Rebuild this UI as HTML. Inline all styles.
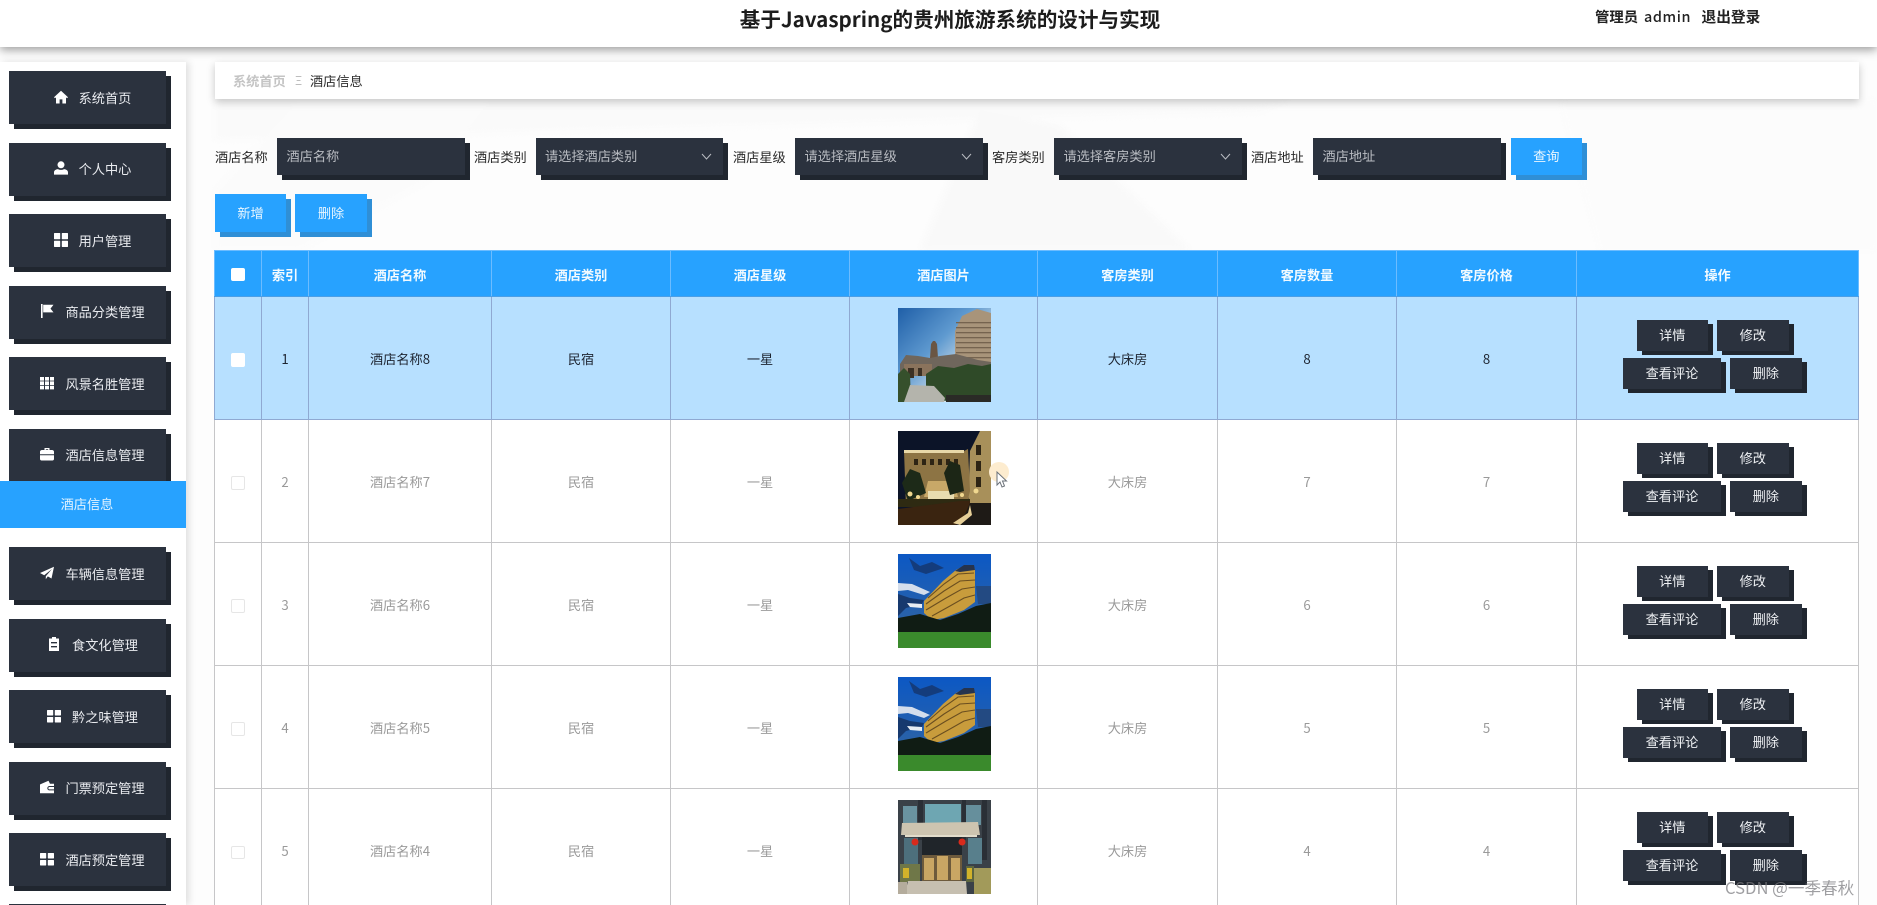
<!DOCTYPE html>
<html lang="zh-CN">
<head>
<meta charset="utf-8">
<title>基于Javaspring的贵州旅游系统的设计与实现</title>
<style>
*{box-sizing:border-box;margin:0;padding:0}
html,body{width:1877px;height:905px;overflow:hidden;background:#fdfdfd}
body{font-family:"Noto Sans CJK SC","Liberation Sans",sans-serif;font-size:13.2px;color:#333}
#page{position:relative;width:1877px;height:905px;overflow:hidden}
.abs{position:absolute}
#bg{position:absolute;left:0;top:0;filter:blur(3px)}
#hdr{position:absolute;left:0;top:0;width:1877px;height:47px;background:#fff;box-shadow:0 3px 9px rgba(0,0,0,.38);z-index:5}
#title{position:absolute;left:640px;width:620px;top:3px;text-align:center;font-size:20.6px;line-height:30px;font-weight:700;color:#1c1c1c;white-space:nowrap}
.u{position:absolute;top:5.5px;font-size:14.4px;line-height:22px;font-weight:700;color:#222;white-space:nowrap}
#side{position:absolute;left:0;top:62px;width:186px;height:843px;background:#fff;box-shadow:3px 0 7px rgba(0,0,0,.12)}
.m{position:absolute;left:9px;width:157px;height:53px;background:#2b323e;box-shadow:5px 5px 0 #20262f;color:#e9ebef;display:flex;align-items:center;justify-content:center;padding-left:10px;font-size:13.2px;line-height:18px;white-space:nowrap}
.m svg{width:14px;height:14px;margin-right:11px;flex:none;fill:#fff;position:relative;top:-1px}
#act{position:absolute;left:0;top:481px;width:186px;height:47px;background:#27a2ff;color:#e2f3ff;text-align:center;line-height:46px;font-size:13.2px;padding-right:12px}
#crumb{position:absolute;left:215px;top:62px;width:1644px;height:37px;background:#fff;box-shadow:0 3px 8px rgba(0,0,0,.22);line-height:38px;font-size:13.2px}
#crumb span{position:absolute;top:0;white-space:nowrap}
.lb{position:absolute;top:147px;line-height:20px;font-size:13.2px;color:#2a2a2a;white-space:nowrap}
.ip{position:absolute;top:138px;height:37px;width:187.5px;background:#2b323e;box-shadow:5px 5px 0 #20262f;color:#b9bcc2;font-size:13.2px;line-height:36px;padding-left:9.5px;white-space:nowrap}
.ip svg{position:absolute;right:11px;top:15px;width:11px;height:7px;fill:none;stroke:#b9bcc2;stroke-width:1}
.bb{position:absolute;background:#27a2ff;box-shadow:5px 5px 0 #2f8fd6;color:#e8f6ff;text-align:center;font-size:13.2px}
table{position:absolute;left:214px;top:250px;width:1644px;table-layout:fixed;border-collapse:collapse;background:#fff}
th{height:46px;background:#27a2ff;color:#f2faff;font-weight:700;font-size:13.2px;border:1px solid #6cbcff;border-bottom-color:#4c9fe6;text-align:center;padding:2px 0 0}
td{height:123px;border:1px solid #c6c6c8;color:#9a9a9a;text-align:center;padding:0;background:#fff;font-size:13.2px}
tr.sel td{background:#b7e0ff;color:#1d2430;border-color:#8fa9d2}
tr.last td{height:117px;vertical-align:top;padding-top:52px;line-height:20px;border-bottom:none}
.cb{display:inline-block;width:13.5px;height:13.5px;border-radius:2px;background:#fff;border:1px solid #e6e6e6;vertical-align:middle}
th .cb,tr.sel .cb{border-color:#fff}
th .cb{position:relative;top:-2px}
.im{position:absolute;left:898px;width:93px;height:94px;display:block;filter:blur(.35px)}
.a{position:absolute;background:#2b323e;box-shadow:5px 4px 0 #20262f;color:#eef0f3;text-align:center;font-size:13.2px;line-height:30px;height:30.5px;white-space:nowrap}
#wm{position:absolute;left:1725px;top:875px;font-size:16.6px;line-height:24px;color:rgba(120,120,125,.72);white-space:nowrap;z-index:9}
</style>
</head>
<body>
<div id="page">
<svg id="bg" width="1877" height="905" viewBox="0 0 1877 905">
<polygon points="215,100 1290,100 1260,112 215,140" fill="#fafafa"/>
<polygon points="300,100 490,100 430,180 300,250 215,250 215,190" fill="#fbfbfb"/>
<polygon points="980,110 1060,125 1190,250 920,250" fill="#f9f9f9"/>
<polygon points="1560,100 1877,100 1877,250 1600,250" fill="#fcfcfc"/>
</svg>

<div id="hdr">
<div id="title">基于Javaspring的贵州旅游系统的设计与实现</div>
<div class="u" style="left:1595px">管理员</div>
<div class="u" style="left:1644px;letter-spacing:.6px;font-weight:500">admin</div>
<div class="u" style="left:1701.5px;font-size:14.7px">退出登录</div>
</div>

<div id="side"></div>

<div class="m" style="top:71px"><svg viewBox="0 0 14 14"><path d="M7 .8 0 7.2l1 1.1 1-.9V13.5h3.6V9.4h2.8v4.1H12V7.4l1 .9 1-1.1z"/></svg>系统首页</div>
<div class="m" style="top:142.5px"><svg viewBox="0 0 14 14"><circle cx="7" cy="3.8" r="3.5"/><path d="M0 13.6v-2.2C0 9.3 2 8.3 4 8.1c1.8 1 4.2 1 6 0 2 .2 4 1.2 4 3.3v2.2z"/></svg>个人中心</div>
<div class="m" style="top:214px"><svg viewBox="0 0 14 14"><rect x="0" y="0" width="6.2" height="6.2" rx=".6"/><rect x="7.8" y="0" width="6.2" height="6.2" rx=".6"/><rect x="0" y="7.8" width="6.2" height="6.2" rx=".6"/><rect x="7.8" y="7.8" width="6.2" height="6.2" rx=".6"/></svg>用户管理</div>
<div class="m" style="top:285.5px"><svg viewBox="0 0 14 14"><path d="M1 0h1.6v14H1zM3.2 .8H13.5l-3 3.800 3 3.800H3.2z"/></svg>商品分类管理</div>
<div class="m" style="top:357px"><svg viewBox="0 0 14 14"><path d="M0 1h4v3.600H0zM5 1h4v3.600H5zM10 1h4v3.600h-4zM0 5.400h4V9H0zM5 5.400h4V9H5zM10 5.400h4V9h-4zM0 9.800h4v3.600H0zM5 9.800h4v3.600H5zM10 9.800h4v3.600h-4z"/></svg>风景名胜管理</div>
<div class="m" style="top:428.5px"><svg viewBox="0 0 14 14"><path d="M4.5 3V1h5v2h2.500c1 0 2 .6 2 1.800V7.200H0V4.800C0 3.600 1 3 2 3zM5.800 3h2.400V2.200H5.800zM0 8.200h14v3.800c0 .8-.7 1.500-1.500 1.500h-11C.7 13.500 0 12.800 0 12z"/></svg>酒店信息管理</div>
<div id="act">酒店信息</div>
<div class="m" style="top:547px"><svg viewBox="0 0 14 14"><path d="M14 .8 11.500 12.500 7.800 10.400 5.800 13.300V10.200L12 3 4.200 9.200 0 7z"/></svg>车辆信息管理</div>
<div class="m" style="top:618.5px"><svg viewBox="0 0 14 14"><path d="M5 0h4v1.500h3v12.500H2V1.500h3zM4 5v1.400h6V5zM4 9v1.400h6V9z" fill-rule="evenodd"/></svg>食文化管理</div>
<div class="m" style="top:690px"><svg viewBox="0 0 14 14"><rect x="0" y="1" width="6.2" height="5.5" rx=".6"/><rect x="7.8" y="1" width="6.2" height="5.5" rx=".6"/><rect x="0" y="8" width="6.2" height="5.5" rx=".6"/><rect x="7.8" y="8" width="6.2" height="5.5" rx=".6"/></svg>黔之味管理</div>
<div class="m" style="top:761.5px"><svg viewBox="0 0 14 14"><path d="M0 4.500 1 4 8.500 .8 10 3.800H14v2.200H9.500a2.200 2.200 0 0 0 0 4.400H14v2.800H0zM9.500 7H14v2.400H9.500a1.200 1.200 0 0 1 0-2.400z"/></svg>门票预定管理</div>
<div class="m" style="top:833px"><svg viewBox="0 0 14 14"><rect x="0" y="1" width="6.2" height="5.5" rx=".6"/><rect x="7.8" y="1" width="6.2" height="5.5" rx=".6"/><rect x="0" y="8" width="6.2" height="5.5" rx=".6"/><rect x="7.8" y="8" width="6.2" height="5.5" rx=".6"/></svg>酒店预定管理</div>
<div class="abs" style="left:9px;top:904px;width:157px;height:1px;background:#2b323e"></div>

<div id="crumb">
<span style="left:18px;color:#c4c4c4;font-weight:700">系统首页</span>
<span style="left:80px;color:#bdbdbd;font-size:12px">Ξ</span>
<span style="left:95px;color:#2c2c2c">酒店信息</span>
</div>

<div class="lb" style="left:215px">酒店名称</div>
<div class="ip" style="left:277px">酒店名称</div>
<div class="lb" style="left:474px">酒店类别</div>
<div class="ip" style="left:535.5px">请选择酒店类别<svg viewBox="0 0 11 7"><path d="M1 1l4.500 5L10 1"/></svg></div>
<div class="lb" style="left:733px">酒店星级</div>
<div class="ip" style="left:795px">请选择酒店星级<svg viewBox="0 0 11 7"><path d="M1 1l4.500 5L10 1"/></svg></div>
<div class="lb" style="left:992px">客房类别</div>
<div class="ip" style="left:1054px">请选择客房类别<svg viewBox="0 0 11 7"><path d="M1 1l4.500 5L10 1"/></svg></div>
<div class="lb" style="left:1251px">酒店地址</div>
<div class="ip" style="left:1313px">酒店地址</div>
<div class="bb" style="left:1511px;top:138px;width:70.5px;height:37px;line-height:36px">查询</div>
<div class="bb" style="left:215px;top:194px;width:71px;height:38px;line-height:38px">新增</div>
<div class="bb" style="left:295px;top:194px;width:72px;height:38px;line-height:38px">删除</div>

<table>
<colgroup><col style="width:47px"><col style="width:47px"><col style="width:183px"><col style="width:179px"><col style="width:179px"><col style="width:188px"><col style="width:180px"><col style="width:179px"><col style="width:180px"><col style="width:282px"></colgroup>
<tr><th><span class="cb"></span></th><th>索引</th><th>酒店名称</th><th>酒店类别</th><th>酒店星级</th><th>酒店图片</th><th>客房类别</th><th>客房数量</th><th>客房价格</th><th>操作</th></tr>
<tr class="sel"><td><span class="cb"></span></td><td>1</td><td>酒店名称8</td><td>民宿</td><td>一星</td><td></td><td>大床房</td><td>8</td><td>8</td><td></td></tr>
<tr><td><span class="cb"></span></td><td>2</td><td>酒店名称7</td><td>民宿</td><td>一星</td><td></td><td>大床房</td><td>7</td><td>7</td><td></td></tr>
<tr><td><span class="cb"></span></td><td>3</td><td>酒店名称6</td><td>民宿</td><td>一星</td><td></td><td>大床房</td><td>6</td><td>6</td><td></td></tr>
<tr><td><span class="cb"></span></td><td>4</td><td>酒店名称5</td><td>民宿</td><td>一星</td><td></td><td>大床房</td><td>5</td><td>5</td><td></td></tr>
<tr class="last"><td><span class="cb"></span></td><td>5</td><td>酒店名称4</td><td>民宿</td><td>一星</td><td></td><td>大床房</td><td>4</td><td>4</td><td></td></tr>
</table>

<svg width="0" height="0" style="position:absolute">
<defs>
<linearGradient id="sk1" x1="0" y1="0" x2="1" y2="1"><stop offset="0" stop-color="#1f5fa8"/><stop offset=".4" stop-color="#5f9ad0"/><stop offset=".7" stop-color="#d6e2ea"/><stop offset="1" stop-color="#e6e8e6"/></linearGradient>
<linearGradient id="sk3" x1="0" y1="0" x2="0" y2="1"><stop offset="0" stop-color="#0c58c4"/><stop offset=".7" stop-color="#2a62a8"/></linearGradient>
<symbol id="h1" viewBox="0 0 93 94" preserveAspectRatio="none">
<rect width="93" height="94" fill="url(#sk1)"/>
<polygon points="57,23 64,8 79,1 93,5 93,58 57,58" fill="#a8947a"/>
<g fill="#75634f"><rect x="58" y="14" width="35" height="1.3"/><rect x="58" y="19" width="35" height="1.3"/><rect x="58" y="24" width="35" height="1.3"/><rect x="58" y="29" width="35" height="1.3"/><rect x="58" y="34" width="35" height="1.3"/><rect x="58" y="39" width="35" height="1.3"/><rect x="58" y="44" width="35" height="1.3"/><rect x="58" y="49" width="35" height="1.3"/></g>
<polygon points="35,33 37,33 39,36 40,50 32,50 33,36" fill="#6a5644"/>
<polygon points="2,56 8,47 20,48 32,50 42,48 58,46 80,52 93,54 93,64 2,64" fill="#6f665c"/>
<rect x="6" y="56" width="28" height="12" fill="#8a735c"/>
<rect x="10" y="60" width="6" height="10" fill="#3c3024"/>
<rect x="20" y="60" width="4" height="8" fill="#3c3024"/>
<polygon points="28,94 28,66 40,58 56,60 70,56 84,58 93,56 93,90 60,92" fill="#2f4a28"/>
<polygon points="0,94 0,66 6,60 12,66 13,94" fill="#36502c"/>
<polygon points="6,94 12,77 36,78 47,90 46,94" fill="#b4b4ac"/>
<rect x="48" y="87" width="45" height="7" fill="#2a2a26"/>
</symbol>
<symbol id="h2" viewBox="0 0 93 94" preserveAspectRatio="none">
<rect width="93" height="94" fill="#0c1428"/>
<polygon points="72,20 82,0 93,0 93,80 70,80" fill="#a8905a"/>
<polygon points="6,20 62,22 70,18 72,60 68,76 8,76" fill="#8d7444"/>
<rect x="6" y="19" width="60" height="3" fill="#e8d8a8"/>
<g fill="#2d2414"><rect x="16" y="28" width="4" height="6"/><rect x="24" y="28" width="4" height="6"/><rect x="32" y="28" width="4" height="6"/><rect x="40" y="28" width="4" height="6"/><rect x="48" y="28" width="4" height="6"/><rect x="56" y="28" width="4" height="6"/><rect x="78" y="14" width="5" height="10"/><rect x="78" y="30" width="5" height="10"/><rect x="78" y="46" width="5" height="10"/></g>
<polygon points="30,50 56,50 60,66 26,66" fill="#c8a868"/>
<polygon points="30,60 56,60 56,72 30,72" fill="#e8dcb0"/>
<polygon points="4,52 12,38 22,42 28,62 10,70" fill="#1d2a18"/>
<polygon points="46,42 52,30 62,34 66,60 52,64" fill="#1c2616"/>
<rect x="0" y="68" width="72" height="8" fill="#2e2a12"/>
<g fill="#f0d890"><circle cx="12" cy="63" r="2.5"/><circle cx="20" cy="66" r="2"/><circle cx="64" cy="64" r="2"/><circle cx="78" cy="60" r="2.5"/></g>
<polygon points="0,78 62,70 72,70 72,84 58,94 0,94" fill="#3a2410"/>
<polygon points="72,72 93,72 93,94 62,94" fill="#1e1a16"/>
<polygon points="55,92 70,82 72,74 74,84 62,94" fill="#e6cf98"/>
</symbol>
<symbol id="h3" viewBox="0 0 93 94" preserveAspectRatio="none">
<rect width="93" height="94" fill="url(#sk3)"/>
<polygon points="11,4 16,16 28,20 46,14 34,8 22,12" fill="#143c7c"/>
<polygon points="78,32 93,32 93,50 80,50" fill="#234a82"/>
<polygon points="0,29 14,30 32,38 26,41 10,36 0,37" fill="#d4deec"/>
<polygon points="0,40 12,44 26,46 24,50 8,54 0,62" fill="#17396e"/>
<polygon points="9,49 24,50 24,54 12,53" fill="#e8edf3"/>
<path d="M26 59V47L45 27 58 16C64 12 74 11 77 15V48L66 56 46 64 34 66z" fill="#c89c3c"/>
<g stroke="#6a4e20" stroke-width="1.1" fill="none"><path d="M30 44 46 30 60 20 76 19"/><path d="M28 50 46 37 62 27 77 26"/><path d="M28 56 48 44 64 35 77 33"/><path d="M34 62 52 52 66 44 77 41"/></g>
<polygon points="57,17 66,11 76,11 77,16 62,18" fill="#26344e"/>
<polygon points="0,64 22,60 42,66 60,60 78,52 93,49 93,78 0,78" fill="#101c14"/>
<rect x="0" y="78" width="93" height="16" fill="#3a8a2c"/>
</symbol>
<symbol id="h4" viewBox="0 0 93 94" preserveAspectRatio="none">
<rect width="93" height="94" fill="#3a4148"/>
<rect x="5" y="6" width="14" height="20" fill="#6a93a0"/>
<rect x="27" y="4" width="36" height="20" fill="#6ea6b2"/>
<rect x="68" y="5" width="15" height="20" fill="#668f9c"/>
<rect x="20" y="0" width="5" height="40" fill="#2a2f36"/>
<rect x="64" y="0" width="4" height="40" fill="#2a2f36"/>
<rect x="84" y="0" width="5" height="60" fill="#2a2f36"/>
<polygon points="4,23 80,22 82,35 3,35" fill="#cdc4b0"/>
<rect x="7" y="35" width="72" height="2" fill="#e2dccb"/>
<rect x="24" y="37" width="40" height="18" fill="#20252a"/>
<rect x="70" y="38" width="14" height="26" fill="#587f8c"/>
<rect x="6" y="38" width="14" height="26" fill="#4d6f7c"/>
<circle cx="17" cy="42" r="3.5" fill="#d82a1c"/>
<circle cx="64" cy="42" r="3.5" fill="#d82a1c"/>
<rect x="24" y="55" width="40" height="26" fill="#6d5a3c"/>
<g fill="#c9a664"><rect x="26" y="58" width="10" height="22"/><rect x="39" y="56" width="11" height="24"/><rect x="53" y="58" width="9" height="22"/></g>
<rect x="2" y="64" width="20" height="18" fill="#6f7748"/>
<rect x="76" y="68" width="17" height="26" fill="#a29a5a"/>
<rect x="68" y="66" width="8" height="16" fill="#5d6640"/>
<rect x="5" y="68" width="6" height="10" fill="#d2b22a"/>
<rect x="69" y="68" width="5" height="11" fill="#d2b22a"/>
<polygon points="7,94 10,81 68,81 69,94" fill="#c6bfb0"/>
<rect x="0" y="82" width="9" height="12" fill="#b4ac9c"/>
</symbol>
</defs>
</svg>

<svg class="im" style="top:308px"><use href="#h1" width="93" height="94"/></svg>
<svg class="im" style="top:431px"><use href="#h2" width="93" height="94"/></svg>
<svg class="im" style="top:554px"><use href="#h3" width="93" height="94"/></svg>
<svg class="im" style="top:677px"><use href="#h3" width="93" height="94"/></svg>
<svg class="im" style="top:800px"><use href="#h4" width="93" height="94"/></svg>

<div class="a" style="left:1636.5px;top:320px;width:71.5px">详情</div><div class="a" style="left:1717px;top:320px;width:71.5px">修改</div><div class="a" style="left:1623px;top:358px;width:98px">查看评论</div><div class="a" style="left:1730px;top:358px;width:71.5px">删除</div>
<div class="a" style="left:1636.5px;top:443px;width:71.5px">详情</div><div class="a" style="left:1717px;top:443px;width:71.5px">修改</div><div class="a" style="left:1623px;top:481px;width:98px">查看评论</div><div class="a" style="left:1730px;top:481px;width:71.5px">删除</div>
<div class="a" style="left:1636.5px;top:566px;width:71.5px">详情</div><div class="a" style="left:1717px;top:566px;width:71.5px">修改</div><div class="a" style="left:1623px;top:604px;width:98px">查看评论</div><div class="a" style="left:1730px;top:604px;width:71.5px">删除</div>
<div class="a" style="left:1636.5px;top:689px;width:71.5px">详情</div><div class="a" style="left:1717px;top:689px;width:71.5px">修改</div><div class="a" style="left:1623px;top:727px;width:98px">查看评论</div><div class="a" style="left:1730px;top:727px;width:71.5px">删除</div>
<div class="a" style="left:1636.5px;top:812px;width:71.5px">详情</div><div class="a" style="left:1717px;top:812px;width:71.5px">修改</div><div class="a" style="left:1623px;top:850px;width:98px">查看评论</div><div class="a" style="left:1730px;top:850px;width:71.5px">删除</div>

<svg class="abs" style="left:988px;top:461px" width="24" height="30" viewBox="0 0 24 30">
<circle cx="11" cy="11" r="10" fill="#fdeccf"/>
<path d="M9 11v13l3-3 2 5 2.5-1-2-5h4z" fill="#fff" stroke="#6a7078" stroke-width="1"/>
</svg>

<div id="wm">CSDN @一季春秋</div>
</div>
</body>
</html>
